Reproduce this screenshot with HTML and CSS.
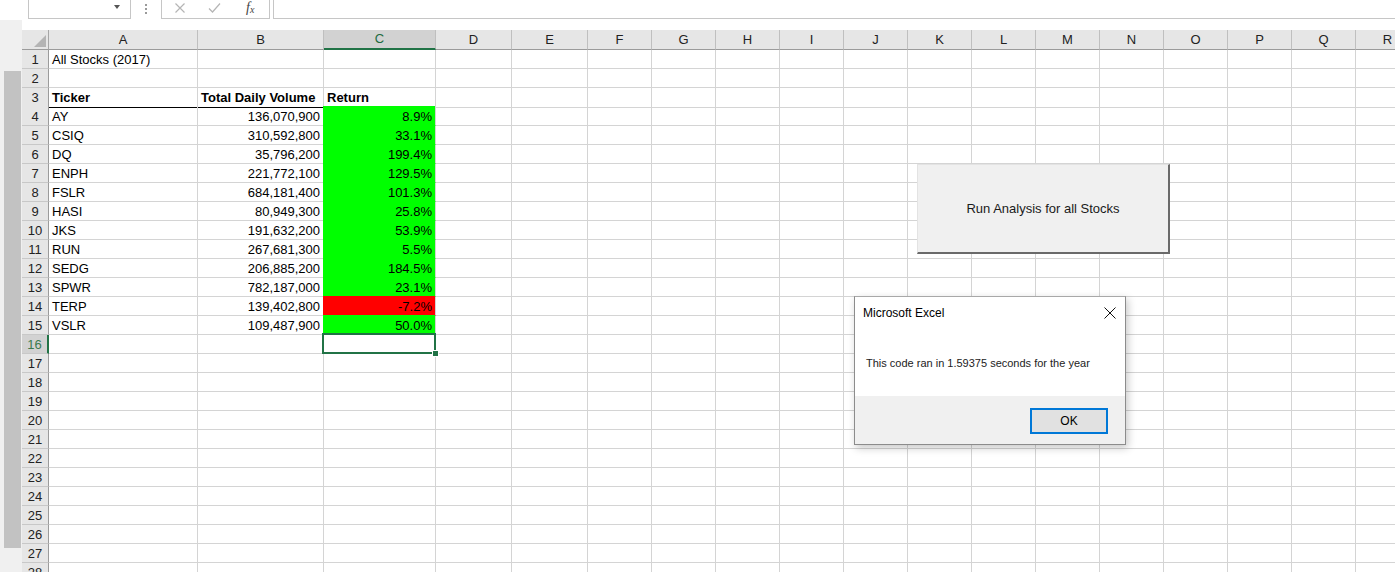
FILE: index.html
```html
<!DOCTYPE html>
<html>
<head>
<meta charset="utf-8">
<title>Excel - All Stocks</title>
<link rel="stylesheet" href="styles.css">
</head>
<body>
<div class="formula-bar">
  <div class="namebox"><span class="caret"></span></div>
  <div class="grip"><i></i><i></i><i></i></div>
  <div class="fx-buttons">
    <svg class="fx-icon" width="12" height="12" viewBox="0 0 12 12"><path d="M1.5 1.5 L10.5 10.5 M10.5 1.5 L1.5 10.5" stroke="#b5b5b5" stroke-width="1.2" fill="none"/></svg>
    <svg class="fx-icon" width="13" height="12" viewBox="0 0 13 12"><path d="M1 6.5 L4.5 10 L12 1.5" stroke="#b5b5b5" stroke-width="1.2" fill="none"/></svg>
    <span class="fx">f<sub>x</sub></span>
  </div>
  <div class="formula"></div>
</div>

<div class="workspace">
  <div class="rail"><div class="thumb"></div></div>
  <div class="sheet-area">
    <div class="sheet">
      <div class="row head">
        <span class="corner"><span class="tri"></span></span>
        <span class="ch">A</span><span class="ch">B</span><span class="ch act">C</span><span class="ch">D</span><span class="ch">E</span><span class="ch">F</span><span class="ch">G</span><span class="ch">H</span><span class="ch">I</span><span class="ch">J</span><span class="ch">K</span><span class="ch">L</span><span class="ch">M</span><span class="ch">N</span><span class="ch">O</span><span class="ch">P</span><span class="ch">Q</span><span class="ch">R</span>
      </div>
      <div class="row">
        <span class="rh">1</span><span>All Stocks (2017)</span>
        <span></span><span></span><span></span><span></span><span></span>
        <span></span><span></span><span></span><span></span><span></span>
        <span></span><span></span><span></span><span></span><span></span>
        <span></span><span></span>
      </div>
      <div class="row">
        <span class="rh">2</span>
        <span></span><span></span><span></span><span></span><span></span>
        <span></span><span></span><span></span><span></span><span></span>
        <span></span><span></span><span></span><span></span><span></span>
        <span></span><span></span><span></span>
      </div>
      <div class="row">
        <span class="rh">3</span><span class="hd ul">Ticker</span><span class="hd ul">Total Daily Volume</span><span class="hd">Return</span>
        <span></span><span></span><span></span><span></span><span></span>
        <span></span><span></span><span></span><span></span><span></span>
        <span></span><span></span><span></span><span></span><span></span>
      </div>
      <div class="row">
        <span class="rh">4</span><span>AY</span><span class="num">136,070,900</span><span class="num pos">8.9%</span>
        <span></span><span></span><span></span><span></span><span></span>
        <span></span><span></span><span></span><span></span><span></span>
        <span></span><span></span><span></span><span></span><span></span>
      </div>
      <div class="row">
        <span class="rh">5</span><span>CSIQ</span><span class="num">310,592,800</span><span class="num pos">33.1%</span>
        <span></span><span></span><span></span><span></span><span></span>
        <span></span><span></span><span></span><span></span><span></span>
        <span></span><span></span><span></span><span></span><span></span>
      </div>
      <div class="row">
        <span class="rh">6</span><span>DQ</span><span class="num">35,796,200</span><span class="num pos">199.4%</span>
        <span></span><span></span><span></span><span></span><span></span>
        <span></span><span></span><span></span><span></span><span></span>
        <span></span><span></span><span></span><span></span><span></span>
      </div>
      <div class="row">
        <span class="rh">7</span><span>ENPH</span><span class="num">221,772,100</span><span class="num pos">129.5%</span>
        <span></span><span></span><span></span><span></span><span></span>
        <span></span><span></span><span></span><span></span><span></span>
        <span></span><span></span><span></span><span></span><span></span>
      </div>
      <div class="row">
        <span class="rh">8</span><span>FSLR</span><span class="num">684,181,400</span><span class="num pos">101.3%</span>
        <span></span><span></span><span></span><span></span><span></span>
        <span></span><span></span><span></span><span></span><span></span>
        <span></span><span></span><span></span><span></span><span></span>
      </div>
      <div class="row">
        <span class="rh">9</span><span>HASI</span><span class="num">80,949,300</span><span class="num pos">25.8%</span>
        <span></span><span></span><span></span><span></span><span></span>
        <span></span><span></span><span></span><span></span><span></span>
        <span></span><span></span><span></span><span></span><span></span>
      </div>
      <div class="row">
        <span class="rh">10</span><span>JKS</span><span class="num">191,632,200</span><span class="num pos">53.9%</span>
        <span></span><span></span><span></span><span></span><span></span>
        <span></span><span></span><span></span><span></span><span></span>
        <span></span><span></span><span></span><span></span><span></span>
      </div>
      <div class="row">
        <span class="rh">11</span><span>RUN</span><span class="num">267,681,300</span><span class="num pos">5.5%</span>
        <span></span><span></span><span></span><span></span><span></span>
        <span></span><span></span><span></span><span></span><span></span>
        <span></span><span></span><span></span><span></span><span></span>
      </div>
      <div class="row">
        <span class="rh">12</span><span>SEDG</span><span class="num">206,885,200</span><span class="num pos">184.5%</span>
        <span></span><span></span><span></span><span></span><span></span>
        <span></span><span></span><span></span><span></span><span></span>
        <span></span><span></span><span></span><span></span><span></span>
      </div>
      <div class="row">
        <span class="rh">13</span><span>SPWR</span><span class="num">782,187,000</span><span class="num pos">23.1%</span>
        <span></span><span></span><span></span><span></span><span></span>
        <span></span><span></span><span></span><span></span><span></span>
        <span></span><span></span><span></span><span></span><span></span>
      </div>
      <div class="row">
        <span class="rh">14</span><span>TERP</span><span class="num">139,402,800</span><span class="num neg">-7.2%</span>
        <span></span><span></span><span></span><span></span><span></span>
        <span></span><span></span><span></span><span></span><span></span>
        <span></span><span></span><span></span><span></span><span></span>
      </div>
      <div class="row">
        <span class="rh">15</span><span>VSLR</span><span class="num">109,487,900</span><span class="num pos">50.0%</span>
        <span></span><span></span><span></span><span></span><span></span>
        <span></span><span></span><span></span><span></span><span></span>
        <span></span><span></span><span></span><span></span><span></span>
      </div>
      <div class="row">
        <span class="rh act">16</span><span></span><span></span><span class="sel"></span>
        <span></span><span></span><span></span><span></span><span></span>
        <span></span><span></span><span></span><span></span><span></span>
        <span></span><span></span><span></span><span></span><span></span>
      </div>
      <div class="row">
        <span class="rh">17</span>
        <span></span><span></span><span></span><span></span><span></span>
        <span></span><span></span><span></span><span></span><span></span>
        <span></span><span></span><span></span><span></span><span></span>
        <span></span><span></span><span></span>
      </div>
      <div class="row">
        <span class="rh">18</span>
        <span></span><span></span><span></span><span></span><span></span>
        <span></span><span></span><span></span><span></span><span></span>
        <span></span><span></span><span></span><span></span><span></span>
        <span></span><span></span><span></span>
      </div>
      <div class="row">
        <span class="rh">19</span>
        <span></span><span></span><span></span><span></span><span></span>
        <span></span><span></span><span></span><span></span><span></span>
        <span></span><span></span><span></span><span></span><span></span>
        <span></span><span></span><span></span>
      </div>
      <div class="row">
        <span class="rh">20</span>
        <span></span><span></span><span></span><span></span><span></span>
        <span></span><span></span><span></span><span></span><span></span>
        <span></span><span></span><span></span><span></span><span></span>
        <span></span><span></span><span></span>
      </div>
      <div class="row">
        <span class="rh">21</span>
        <span></span><span></span><span></span><span></span><span></span>
        <span></span><span></span><span></span><span></span><span></span>
        <span></span><span></span><span></span><span></span><span></span>
        <span></span><span></span><span></span>
      </div>
      <div class="row">
        <span class="rh">22</span>
        <span></span><span></span><span></span><span></span><span></span>
        <span></span><span></span><span></span><span></span><span></span>
        <span></span><span></span><span></span><span></span><span></span>
        <span></span><span></span><span></span>
      </div>
      <div class="row">
        <span class="rh">23</span>
        <span></span><span></span><span></span><span></span><span></span>
        <span></span><span></span><span></span><span></span><span></span>
        <span></span><span></span><span></span><span></span><span></span>
        <span></span><span></span><span></span>
      </div>
      <div class="row">
        <span class="rh">24</span>
        <span></span><span></span><span></span><span></span><span></span>
        <span></span><span></span><span></span><span></span><span></span>
        <span></span><span></span><span></span><span></span><span></span>
        <span></span><span></span><span></span>
      </div>
      <div class="row">
        <span class="rh">25</span>
        <span></span><span></span><span></span><span></span><span></span>
        <span></span><span></span><span></span><span></span><span></span>
        <span></span><span></span><span></span><span></span><span></span>
        <span></span><span></span><span></span>
      </div>
      <div class="row">
        <span class="rh">26</span>
        <span></span><span></span><span></span><span></span><span></span>
        <span></span><span></span><span></span><span></span><span></span>
        <span></span><span></span><span></span><span></span><span></span>
        <span></span><span></span><span></span>
      </div>
      <div class="row">
        <span class="rh">27</span>
        <span></span><span></span><span></span><span></span><span></span>
        <span></span><span></span><span></span><span></span><span></span>
        <span></span><span></span><span></span><span></span><span></span>
        <span></span><span></span><span></span>
      </div>
      <div class="row">
        <span class="rh">28</span>
        <span></span><span></span><span></span><span></span><span></span>
        <span></span><span></span><span></span><span></span><span></span>
        <span></span><span></span><span></span><span></span><span></span>
        <span></span><span></span><span></span>
      </div>
    </div>
  </div>
</div>

<button class="macro-btn" type="button">Run Analysis for all Stocks</button>

<div class="dialog">
  <div class="dlg-title">
    <span>Microsoft Excel</span>
    <svg class="dlg-close" width="12" height="12" viewBox="0 0 12 12"><path d="M0.5 0.5 L11.5 11.5 M11.5 0.5 L0.5 11.5" stroke="#111" stroke-width="1" fill="none"/></svg>
  </div>
  <div class="dlg-body">This code ran in 1.59375 seconds for the year</div>
  <div class="dlg-foot"><button class="ok" type="button">OK</button></div>
</div>
</body>
</html>
```

FILE: styles.css
```css
html, body {
  margin: 0;
  padding: 0;
}
body {
  width: 1395px;
  height: 572px;
  overflow: hidden;
  background: #ffffff;
  font-family: "Liberation Sans", Arial, sans-serif;
  color: #000;
}

/* ---------- formula bar ---------- */
.formula-bar {
  display: flex;
  height: 19px;
  padding-left: 28px;
  box-sizing: border-box;
}
.namebox {
  width: 103px;
  box-sizing: border-box;
  border: 1px solid #c6c6c6;
  border-top: none;
  display: flex;
  justify-content: flex-end;
  align-items: flex-start;
  padding: 5px 10px 0 0;
}
.caret {
  width: 0;
  height: 0;
  border-left: 3.5px solid transparent;
  border-right: 3.5px solid transparent;
  border-top: 4px solid #555;
}
.grip {
  width: 30px;
  display: flex;
  flex-direction: column;
  align-items: center;
  justify-content: center;
  gap: 2px;
  padding-bottom: 2px;
  box-sizing: border-box;
}
.grip i {
  width: 2px;
  height: 2px;
  background: #9a9a9a;
}
.fx-buttons {
  width: 109px;
  box-sizing: border-box;
  border: 1px solid #c6c6c6;
  border-top: none;
  display: flex;
  align-items: center;
  padding: 0 0 2px 12px;
  gap: 22px;
}
.fx {
  font-family: "Liberation Serif", "Times New Roman", serif;
  font-style: italic;
  font-size: 14px;
  color: #444;
  line-height: 12px;
  margin-left: 3px;
}
.fx sub {
  font-size: 10px;
  vertical-align: 0;
  position: relative;
  top: 1px;
}
.formula {
  flex: 1;
  margin-left: 3px;
  border-left: 1px solid #c6c6c6;
  border-bottom: 1px solid #c6c6c6;
}

/* ---------- workspace ---------- */
.workspace {
  display: flex;
  margin-top: 1px;
  height: 552px;
}
.rail {
  width: 22px;
  flex: none;
  background: #f0f0f0;
  padding: 51px 0 0 4px;
  box-sizing: border-box;
}
.thumb {
  width: 17px;
  height: 477px;
  background: #c2c2c2;
}
.sheet-area {
  flex: none;
  padding-top: 10px;
}
.sheet {
  font-size: 13px;
}
.row {
  display: grid;
  grid-template-columns: 27px 149px 126px 112px 76px 76px repeat(13, 64px);
  height: 19px;
}
.row.head {
  height: 20px;
}
.row > span {
  box-sizing: border-box;
  border-right: 1px solid #d4d4d4;
  border-bottom: 1px solid #d4d4d4;
  line-height: 19px;
  padding: 0 3px;
  white-space: nowrap;
  overflow: hidden;
}

/* headers */
.row > .corner {
  background: #e6e6e6;
  border-right: 1px solid #a6a6a6;
  border-bottom: 1px solid #9b9b9b;
  position: relative;
}
.tri {
  position: absolute;
  right: 2px;
  bottom: 2px;
  width: 12px;
  height: 12px;
  background: #b4b4b4;
  clip-path: polygon(100% 0, 100% 100%, 0 100%);
}
.row > .ch {
  background: #e6e6e6;
  border-right: 1px solid #bfbfbf;
  border-bottom: 1px solid #9b9b9b;
  text-align: center;
  line-height: 19px;
  color: #222;
}
.row > .ch.act {
  background: #d2d2d2;
  border-bottom: 2px solid #217346;
  color: #1d6b40;
  line-height: 18px;
}
.row > .rh {
  background: #e6e6e6;
  border-right: 1px solid #9b9b9b;
  border-bottom: 1px solid #c8c8c8;
  text-align: center;
  padding: 0;
  color: #222;
}
.row > .rh.act {
  background: #d2d2d2;
  border-right: 2px solid #217346;
  color: #3c7a4f;
}

/* cells */
.row > .hd {
  font-weight: bold;
  overflow: visible;
}
.row > .ul {
  border-bottom-color: #000;
}
.row > .num {
  text-align: right;
}
.row > .pos {
  background: #00ff00;
  border-bottom-color: #00ff00;
  box-shadow: -1px -1px 0 #00ff00;
}
.row > .neg {
  background: #ff0000;
  border-bottom-color: #ff0000;
  box-shadow: -1px -1px 0 #ff0000;
}
.row > .sel {
  position: relative;
  overflow: visible;
}
.sel::after {
  content: "";
  position: absolute;
  left: -2px;
  top: -2px;
  right: -1px;
  bottom: -1px;
  border: 2px solid #217346;
}
.sel::before {
  content: "";
  position: absolute;
  right: -4px;
  bottom: -4px;
  width: 5px;
  height: 5px;
  background: #217346;
  border: 1px solid #fff;
  z-index: 2;
}

/* ---------- macro button (sheet object) ---------- */
.macro-btn {
  position: absolute;
  left: 917px;
  top: 164px;
  width: 253px;
  height: 90px;
  margin: 0;
  box-sizing: border-box;
  background: #f0f0f0;
  border-top: 1px solid #e3e3e3;
  border-left: 1px solid #e3e3e3;
  border-right: 2px solid #6a6a6a;
  border-bottom: 2px solid #6a6a6a;
  font-family: "Liberation Sans", Arial, sans-serif;
  font-size: 13px;
  color: #1a1a1a;
  padding: 0;
}

/* ---------- message box ---------- */
.dialog {
  position: absolute;
  left: 854px;
  top: 296px;
  width: 272px;
  height: 149px;
  box-sizing: border-box;
  background: #fff;
  border: 1px solid #8c8c8c;
  border-top-color: #a8a8a8;
  box-shadow: 2px 3px 8px rgba(0, 0, 0, 0.22);
  display: flex;
  flex-direction: column;
  font-family: "Liberation Sans", Arial, sans-serif;
}
.dlg-title {
  height: 31px;
  flex: none;
  display: flex;
  align-items: center;
  justify-content: space-between;
  padding: 0 9px 1px 8px;
  font-size: 12px;
  color: #000;
}
.dlg-close {
  margin-top: 1px;
}
.dlg-body {
  height: 67px;
  flex: none;
  box-sizing: border-box;
  padding: 27px 0 0 11px;
  font-size: 11px;
  color: #222;
  line-height: 14px;
}
.dlg-foot {
  flex: 1;
  background: #f0f0f0;
  display: flex;
  justify-content: flex-end;
  align-items: flex-start;
  padding: 12px 17px 0 0;
}
.ok {
  width: 78px;
  height: 26px;
  margin: 0;
  box-sizing: border-box;
  background: #e1e1e1;
  border: 2px solid #0078d7;
  font-family: "Liberation Sans", Arial, sans-serif;
  font-size: 12px;
  color: #000;
  padding: 0;
}
```
